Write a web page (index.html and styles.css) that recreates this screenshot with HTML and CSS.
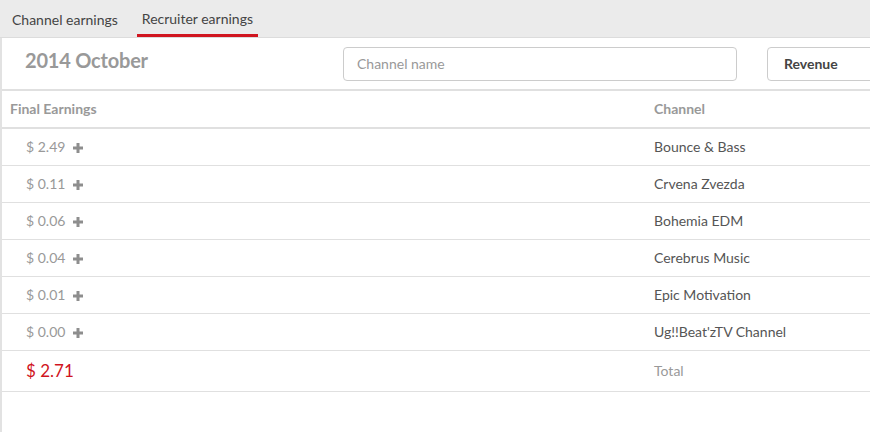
FILE: index.html
```html
<!DOCTYPE html>
<html>
<head>
<meta charset="utf-8">
<link rel="stylesheet" href="styles.css">
</head>
<body>
<div class="tabs">
  <div class="tab">Channel earnings</div>
  <div class="tab active">Recruiter earnings</div>
</div>
<div class="panel">
  <div class="toolbar">
    <h1 class="title">2014 October</h1>
    <input class="search" type="text" placeholder="Channel name">
    <div class="select">Revenue</div>
  </div>
  <table class="earnings">
    <thead>
      <tr><th class="c1">Final Earnings</th><th class="c2">Channel</th></tr>
    </thead>
    <tbody>
      <tr><td class="amount">$ 2.49<svg class="plus" viewBox="0 0 10 10"><rect x="3.5" y="0" width="3" height="10"/><rect x="0" y="3.5" width="10" height="3"/></svg></td><td class="name">Bounce &amp; Bass</td></tr>
      <tr><td class="amount">$ 0.11<svg class="plus" viewBox="0 0 10 10"><rect x="3.5" y="0" width="3" height="10"/><rect x="0" y="3.5" width="10" height="3"/></svg></td><td class="name">Crvena Zvezda</td></tr>
      <tr><td class="amount">$ 0.06<svg class="plus" viewBox="0 0 10 10"><rect x="3.5" y="0" width="3" height="10"/><rect x="0" y="3.5" width="10" height="3"/></svg></td><td class="name">Bohemia EDM</td></tr>
      <tr><td class="amount">$ 0.04<svg class="plus" viewBox="0 0 10 10"><rect x="3.5" y="0" width="3" height="10"/><rect x="0" y="3.5" width="10" height="3"/></svg></td><td class="name">Cerebrus Music</td></tr>
      <tr><td class="amount">$ 0.01<svg class="plus" viewBox="0 0 10 10"><rect x="3.5" y="0" width="3" height="10"/><rect x="0" y="3.5" width="10" height="3"/></svg></td><td class="name">Epic Motivation</td></tr>
      <tr><td class="amount">$ 0.00<svg class="plus" viewBox="0 0 10 10"><rect x="3.5" y="0" width="3" height="10"/><rect x="0" y="3.5" width="10" height="3"/></svg></td><td class="name">Ug!!Beat'zTV Channel</td></tr>
      <tr class="total"><td class="total-amount">$ 2.71</td><td class="total-label">Total</td></tr>
    </tbody>
  </table>
</div>
</body>
</html>
```

FILE: styles.css
```css
html, body {
  margin: 0;
  padding: 0;
  height: 100%;
  overflow: hidden;
  background: #fff;
  font-family: Lato, "Liberation Sans", sans-serif;
}
.tabs {
  display: flex;
  gap: 14px;
  padding-left: 7px;
  background: #ebebeb;
  border-bottom: 1px solid #dcdcdc;
  box-sizing: border-box;
  height: 38px;
}
.tab {
  padding: 0 5px;
  font-size: 14px;
  line-height: 39px;
  height: 37px;
  color: #444;
  box-sizing: border-box;
}
.tab.active {
  border-bottom: 3px solid #d0151f;
  line-height: 38px;
}
.panel {
  width: 100%;
  height: calc(100% - 38px);
  border-left: 2px solid #e2e2e2;
  background: #fff;
  box-sizing: border-box;
}
.toolbar {
  display: flex;
  align-items: center;
  height: 51px;
  padding-top: 1px;
  box-sizing: border-box;
  overflow: hidden;
}
.title {
  margin: 0;
  flex: none;
  width: 341px;
  padding-left: 23px;
  box-sizing: border-box;
  font-size: 20px;
  font-weight: 700;
  letter-spacing: -0.2px;
  color: #999;
  align-self: flex-start;
  margin-top: 9px;
}
.search {
  flex: none;
  width: 394px;
  height: 34px;
  box-sizing: border-box;
  border: 1px solid #ccc;
  border-radius: 4px;
  padding: 0 13px 1px;
  font-family: inherit;
  font-size: 14px;
  color: #555;
  outline: none;
}
.search::placeholder {
  color: #999;
}
.select {
  flex: none;
  margin-left: 30px;
  width: 160px;
  height: 34px;
  box-sizing: border-box;
  border: 1px solid #ccc;
  border-radius: 4px;
  padding-left: 16px;
  line-height: 32px;
  font-size: 14px;
  font-weight: 700;
  color: #444;
}
.earnings {
  width: 100%;
  border-collapse: collapse;
  border-top: 2px solid #e0e0e0;
}
.earnings th {
  text-align: left;
  font-size: 14px;
  font-weight: 700;
  color: #999;
  height: 34px;
  padding: 0 8px 2px;
  border-bottom: 2px solid #e0e0e0;
}
.earnings th.c1 {
  width: 628px;
}
.earnings td {
  height: 34px;
  padding: 0 8px 2px;
  font-size: 14px;
  border-bottom: 1px solid #e0e0e0;
}
.earnings td.amount {
  padding-left: 24px;
  color: #999;
}
.plus {
  width: 10px;
  height: 10px;
  margin-left: 8px;
  fill: #8e8e8e;
  vertical-align: -1px;
}
.earnings td.name {
  color: #555;
}
.earnings tr.total td {
  height: 38px;
}
.earnings td.total-amount {
  padding-left: 24px;
  font-size: 17px;
  color: #d0141e;
}
.earnings td.total-label {
  color: #999;
}
```
